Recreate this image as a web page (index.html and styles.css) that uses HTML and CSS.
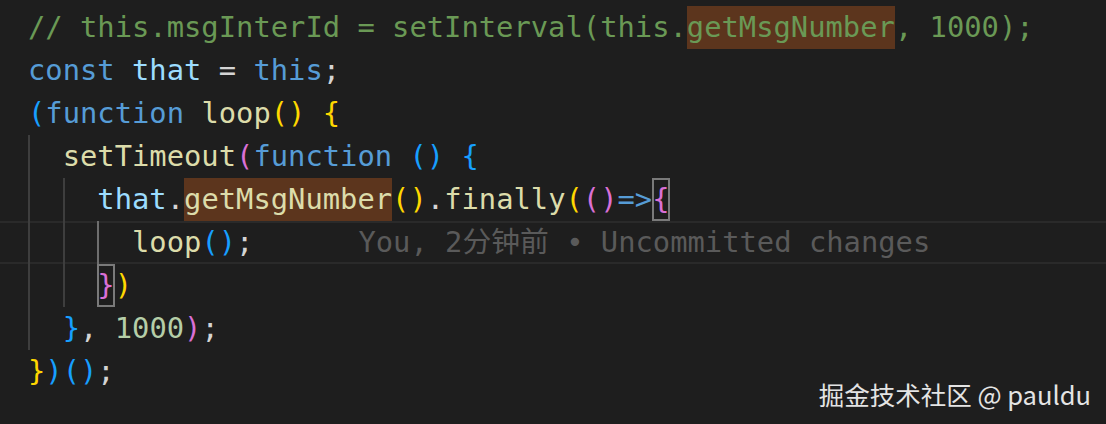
FILE: index.html
```html
<!DOCTYPE html>
<html lang="zh">
<head>
<meta charset="utf-8">
<title>code</title>
<link rel="stylesheet" href="styles.css">
</head>
<body>
<div class="editor">
  <div class="ln"><span class="cm">// this.msgInterId = setInterval(this.<span class="hl">getMsgNumber</span>, 1000);</span></div>
  <div class="ln"><span class="kw">const</span> <span class="var">that</span> <span class="op">=</span> <span class="kw">this</span><span class="op">;</span></div>
  <div class="ln"><span class="b3">(</span><span class="kw">function</span> <span class="fn">loop</span><span class="b1">()</span> <span class="b1">{</span></div>
  <div class="ln"><span class="ig"></span><span class="fn">setTimeout</span><span class="b2">(</span><span class="kw">function</span> <span class="b3">()</span> <span class="b3">{</span></div>
  <div class="ln"><span class="ig"></span><span class="ig"></span><span class="var">that</span><span class="op">.</span><span class="fn hl">getMsgNumber</span><span class="b1">()</span><span class="op">.</span><span class="fn">finally</span><span class="b1">(</span><span class="b2">()</span><span class="kw">=&gt;</span><span class="b2 box">{</span></div>
  <div class="ln cur"><span class="ig"></span><span class="ig"></span><span class="ig act"></span><span class="fn">loop</span><span class="b3">()</span><span class="op">;</span><span class="blame">You, 2分钟前 • Uncommitted changes</span></div>
  <div class="ln"><span class="ig"></span><span class="ig"></span><span class="b2 box">}</span><span class="b1">)</span></div>
  <div class="ln"><span class="ig"></span><span class="b3">}</span><span class="op">, </span><span class="num">1000</span><span class="b2">)</span><span class="op">;</span></div>
  <div class="ln"><span class="b1">}</span><span class="b3">)()</span><span class="op">;</span></div>
</div>
<div class="mark">掘金技术社区 @ pauldu</div>
</body>
</html>
```
FILE: styles.css
```css
html, body {
  margin: 0;
  padding: 0;
  background: #1e1e1e;
  width: 1106px;
  height: 424px;
  overflow: hidden;
}

.editor {
  padding-top: 6px;
  font-family: "DejaVu Sans Mono", "Noto Sans CJK SC", monospace;
  font-size: 28.8px;
  color: #d4d4d4;
}

.ln {
  height: 43px;
  line-height: 43px;
  white-space: pre;
  padding-left: 28px;
}

.cur {
  box-shadow: inset 0 2px 0 #2a2a2a, inset 0 -2px 0 #2a2a2a;
}

.ig {
  display: inline-block;
  width: 2ch;
  height: 43px;
  vertical-align: top;
  box-shadow: inset 2px 0 0 #3e3e3e;
}

.ig.act {
  box-shadow: inset 2px 0 0 #6e6e6e;
}

.cm { color: #6a9955; }
.kw { color: #569cd6; }
.var { color: #9cdcfe; }
.fn { color: #dcdcaa; }
.op { color: #d4d4d4; }
.num { color: #b5cea8; }
.b1 { color: #ffd700; }
.b2 { color: #da70d6; }
.b3 { color: #179fff; }

.hl {
  display: inline-block;
  height: 43px;
  vertical-align: top;
  background: #5c351d;
}

.box {
  display: inline-block;
  width: 1ch;
  height: 43px;
  vertical-align: top;
  outline: 2px solid #7a7a7a;
  outline-offset: -2px;
}

.blame {
  margin-left: 105px;
  color: #5a5a5a;
}

.mark {
  position: absolute;
  right: 15px;
  top: 374px;
  font-family: "Noto Sans CJK SC", "Noto Sans", sans-serif;
  font-size: 25.5px;
  line-height: 40px;
  color: #e4e4e4;
}
```
